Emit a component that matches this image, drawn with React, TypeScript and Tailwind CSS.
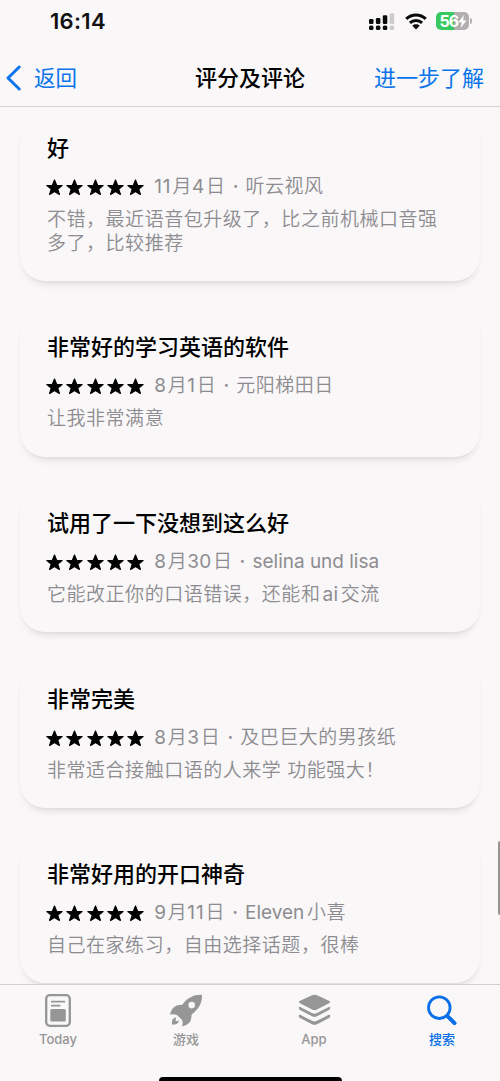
import React from "react";

type Review = { title: string; date: React.ReactNode; author: React.ReactNode; lines: React.ReactNode[]; card: string };

function D({ children }: { children: React.ReactNode }) {
  return <span className="mr-[1.6px] font-normal tracking-[0.2px]">{children}</span>;
}

function Eleven() {
  return <span className="mr-[1px] font-normal tracking-[0.9px]">11</span>;
}

const reviews: Review[] = [
  { title: "好", date: <><Eleven />月<D>4</D>日</>, author: "听云视风", lines: ["不错，最近语音包升级了，比之前机械口音强", "多了，比较推荐"], card: "h-[174px] pt-[25px]" },
  { title: "非常好的学习英语的软件", date: <><D>8</D>月<D>1</D>日</>, author: "元阳梯田日", lines: ["让我非常满意"], card: "h-[151px] pt-[25.4px]" },
  { title: "试用了一下没想到这么好", date: <><D>8</D>月<D>30</D>日</>, author: <span className="font-normal tracking-[-0.02px]">selina und lisa</span>, lines: [<>它能改正你的口语错误，还能和<span className="mx-[2px] font-normal">ai</span>交流</>], card: "h-[151px] pt-[25.8px]" },
  { title: "非常完美", date: <><D>8</D>月<D>3</D>日</>, author: "及巴巨大的男孩纸", lines: ["非常适合接触口语的人来学 功能强大！"], card: "h-[151px] pt-[26px]" },
  { title: "非常好用的开口神奇", date: <><D>9</D>月<Eleven />日</>, author: <><span className="mr-[3px] font-normal tracking-[-0.05px]">Eleven</span>小喜</>, lines: ["自己在家练习，自由选择话题，很棒"], card: "h-[151px] pt-[25.6px]" },
];

function Stars() {
  return (
    <div className="flex gap-[3.3px]">
      {[0, 1, 2, 3, 4].map((i) => (
        <svg key={i} width="17" height="17" viewBox="0 0 16 16" className="block">
          <path d="M8 .9 10 5.9l5.2.3-4.1 3.3 1.5 5.1L8 11.7l-4.6 2.9 1.5-5.1L.8 6.2 6 5.9Z" fill="#000" stroke="#000" strokeWidth="1.1" strokeLinejoin="round" />
        </svg>
      ))}
    </div>
  );
}

function ReviewCard({ review }: { review: Review }) {
  return (
    <article className={`${review.card} mx-[20px] shrink-0 rounded-[25px] bg-[#f9f7f8] pl-[27px] shadow-[0_7px_8px_-5px_rgba(0,0,0,0.13),0_1px_2px_rgba(0,0,0,0.035)] [clip-path:inset(24px_-12px_-20px_-12px)]`}>
      <h2 className="h-[32px] whitespace-nowrap text-[22px] font-medium leading-[32px] text-black">{review.title}</h2>
      <div className="mt-[8.4px] flex h-[30px] items-center">
        <div className="-ml-px pt-px"><Stars /></div>
        <p className="ml-[10px] flex items-center whitespace-nowrap text-[19px] font-[350] leading-[30px] tracking-[0.5px] text-[#8d8c90]">
          <span>{review.date}</span>
          <span className="ml-[6px] mr-[6px] w-[8px] text-center font-medium tracking-normal">·</span>
          <span>{review.author}</span>
        </p>
      </div>
      <div className="mt-[6px]">
        {review.lines.map((line, i) => (
          <p key={i} className="h-[24px] whitespace-nowrap text-[19px] font-[350] leading-[24px] tracking-[0.53px] text-[#8d8c90]">{line}</p>
        ))}
      </div>
    </article>
  );
}

function Tab({ label, active, children }: { label: string; active?: boolean; children: React.ReactNode }) {
  return (
    <div className={`flex w-[128px] shrink-0 flex-col items-center ${active ? "text-[#0a6fe8]" : "text-[#969696]"}`}>
      <div className="flex h-[36px] items-center justify-center">{children}</div>
      <span className="mt-[2px] text-[13px] font-medium leading-[18px]">{label}</span>
    </div>
  );
}

export default function App() {
  return (
    <div className="relative flex h-[1081px] w-[500px] flex-col overflow-hidden bg-[#f9f7f8] font-['Inter','Noto_Sans_CJK_SC',sans-serif]">
      <header className="h-[107px] shrink-0 border-b border-[#d5d4d5]">
        <div className="flex h-[43px] items-center pl-[50px] pr-[28px]">
          <span className="-mt-px text-[22px] font-semibold leading-[26px] tracking-[0.3px] text-[#111]">16:14</span>
          <div className="ml-auto flex items-center">
            <svg width="27" height="19" viewBox="0 0 27 19" className="mb-[2px]">
              <g fill="#0b0b0b">
                <rect x="1" y="8" width="4.5" height="5" rx="1.2" />
                <rect x="7.9" y="7" width="4.5" height="6" rx="1.2" />
                <rect x="14.8" y="4.3" width="4.5" height="8.7" rx="1.2" />
                <rect x="1" y="14.6" width="4.5" height="4.3" rx="1.5" />
                <rect x="7.9" y="14.6" width="4.5" height="4.3" rx="1.5" />
                <rect x="14.8" y="14.6" width="4.5" height="4.3" rx="1.5" />
              </g>
              <g fill="#cbcbcb">
                <rect x="21.7" y="2.3" width="4.5" height="10.7" rx="1.2" />
                <rect x="21.7" y="14.6" width="4.5" height="4.3" rx="1.5" />
              </g>
            </svg>
            <svg width="22" height="17" viewBox="0 0 22 17" className="mb-px ml-[10px]">
              <g fill="none" stroke="#0b0b0b" strokeWidth="3">
                <path d="M1.2 5.8C6.8.6 15.2.6 20.8 5.8" />
                <path d="M4.9 9.8c3.5-3.2 8.7-3.2 12.2 0" />
              </g>
              <path d="M7.3 12.7c2.1-1.9 5.3-1.9 7.4 0L11 16.4Z" fill="#0b0b0b" />
            </svg>
            <div className="mb-px ml-[9.5px] flex h-[18px] w-[33px] items-center rounded-[5px] bg-[linear-gradient(90deg,#37c95f_56%,#b1afb0_56%)] pl-[3.5px]">
              <span className="text-[16px] font-bold leading-[18px] tracking-[-0.9px] text-white">56</span>
              <svg width="9" height="13" viewBox="0 0 9 14"><path d="M6 0 .2 7.7h3.5L2.5 14 8.8 5.8H5.2Z" fill="#fff" /></svg>
            </div>
            <span className="mb-px ml-px h-[6px] w-[2px] rounded-r-full bg-[#b1afb0]" />
          </div>
        </div>
        <nav className="grid h-[70px] grid-cols-[1fr_auto_1fr] items-center whitespace-nowrap pl-[6px] pr-[16px] text-[22px] leading-[32px] text-[#0b74ec]">
          <div className="flex items-center">
            <svg width="16" height="26" viewBox="0 0 16 26"><path d="M13.2 2 2 13l11.2 11" fill="none" stroke="currentColor" strokeWidth="3" strokeLinecap="round" strokeLinejoin="round" /></svg>
            <span className="ml-[12px] text-[21.5px]">返回</span>
          </div>
          <h1 className="pl-[10px] font-medium text-black">评分及评论</h1>
          <span className="text-right">进一步了解</span>
        </nav>
      </header>

      <main className="flex min-h-0 flex-1 flex-col gap-[24.6px] overflow-hidden">
        {reviews.map((review) => <ReviewCard key={review.title} review={review} />)}
      </main>

      <div className="absolute right-0 top-[841px] h-[74px] w-[2px] rounded-l-full bg-[#969596]" />

      <footer className="flex h-[97px] shrink-0 flex-col border-t border-[#cfcfcf] bg-[#f9f7f8]">
        <div className="flex justify-center pt-[7px]">
          <Tab label="Today">
            <svg width="26" height="33" viewBox="0 0 26 33">
              <rect x="1.2" y="1.2" width="23.6" height="30.6" rx="3.5" fill="none" stroke="currentColor" strokeWidth="2.3" />
              <path d="M6.7 7.7h12.7M6.7 11.7h8" stroke="currentColor" strokeWidth="1.7" strokeLinecap="round" />
              <rect x="5.3" y="15" width="15.5" height="12.5" rx="1.5" fill="currentColor" />
            </svg>
          </Tab>
          <Tab label="游戏">
            <svg width="34" height="33" viewBox="0 0 34 33">
              <path fillRule="evenodd" d="M32.4.8C24.5.8 18 4 13.4 10.8 6.5 10.7 3 13.4 1 20.5c3-.5 5.2-.3 7 .5l5.1 5.1c.9 2.1.6 4 0 6.4 6.9-1.6 9.5-5 9.5-12.1C29.8 15.3 33.1 9.4 33 1.5c0-.5-.2-.7-.6-.7ZM22.7 7.8a3.3 3.3 0 1 1 0 6.6 3.3 3.3 0 0 1 0-6.6Z" fill="currentColor" />
              <path d="M7 23.6c-3.1.3-4.3 2.7-4.1 7 4.3.1 6.6-1 7-4.1l-2.7.7-.7-.8Z" fill="currentColor" />
            </svg>
          </Tab>
          <Tab label="App">
            <svg width="33" height="32" viewBox="0 0 33 32" fill="currentColor">
              <path d="M14.5 1.1q2-.9 4 0l12.9 6q1.6.9 0 1.9l-12.9 6.8q-2 .9-4 0L1.6 9q-1.6-1 0-1.9Z" />
              <path d="M.8 13.5q.2-1.2 1.9-.3l11.8 6q2 .9 4 0l11.8-6q1.7-.9 1.9.3.3 1.8-1.2 2.6l-12.5 6.4q-2 .9-4 0L2 16.1Q.5 15.3.8 13.5Z" />
              <path d="M.8 21.4q.2-1.2 1.9-.3l11.8 6q2 .9 4 0l11.8-6q1.7-.9 1.9.3.3 1.8-1.2 2.6l-12.5 6.4q-2 .9-4 0L2 24q-1.5-.8-1.2-2.6Z" />
            </svg>
          </Tab>
          <Tab label="搜索" active>
            <svg width="30" height="31" viewBox="0 0 30 31" fill="none" stroke="currentColor" strokeLinecap="round">
              <circle cx="12.3" cy="12.7" r="10.8" strokeWidth="2.8" />
              <path d="m20.7 21.3 6.8 6.9" strokeWidth="4" />
            </svg>
          </Tab>
        </div>
        <div className="mx-auto mt-auto h-[4px] w-[183px] rounded-t-[4px] bg-black" />
      </footer>
    </div>
  );
}
